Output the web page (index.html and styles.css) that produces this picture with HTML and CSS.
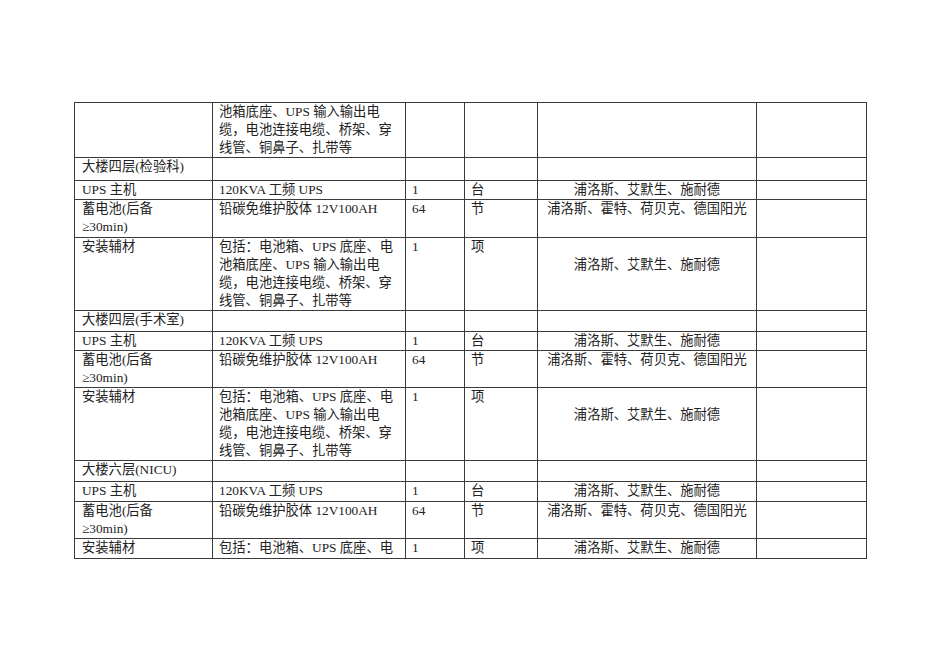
FILE: index.html
```html
<!DOCTYPE html>
<html lang="zh">
<head>
<meta charset="utf-8">
<link rel="stylesheet" href="styles.css">
</head>
<body>
<div class="page">
<table class="sheet">
  <colgroup>
    <col class="c1"><col class="c2"><col class="c3"><col class="c4"><col class="c5"><col class="c6">
  </colgroup>
  <tr class="h55"><td></td><td>池箱底座、UPS 输入输出电<br>缆，电池连接电缆、桥架、穿<br>线管、铜鼻子、扎带等</td><td></td><td></td><td></td><td></td></tr>
  <tr class="h23"><td>大楼四层(检验科)</td><td></td><td></td><td></td><td></td><td></td></tr>
  <tr class="h19"><td>UPS 主机</td><td>120KVA 工频 UPS</td><td>1</td><td>台</td><td class="brand">浦洛斯、艾默生、施耐德</td><td></td></tr>
  <tr class="h38"><td>蓄电池(后备<br>≥30min)</td><td>铅碳免维护胶体 12V100AH</td><td>64</td><td>节</td><td class="brand">浦洛斯、霍特、荷贝克、德国阳光</td><td></td></tr>
  <tr class="h73"><td>安装辅材</td><td>包括：电池箱、UPS 底座、电<br>池箱底座、UPS 输入输出电<br>缆，电池连接电缆、桥架、穿<br>线管、铜鼻子、扎带等</td><td>1</td><td>项</td><td class="brand low">浦洛斯、艾默生、施耐德</td><td></td></tr>
  <tr class="h21"><td>大楼四层(手术室)</td><td></td><td></td><td></td><td></td><td></td></tr>
  <tr class="h19"><td>UPS 主机</td><td>120KVA 工频 UPS</td><td>1</td><td>台</td><td class="brand">浦洛斯、艾默生、施耐德</td><td></td></tr>
  <tr class="h37"><td>蓄电池(后备<br>≥30min)</td><td>铅碳免维护胶体 12V100AH</td><td>64</td><td>节</td><td class="brand">浦洛斯、霍特、荷贝克、德国阳光</td><td></td></tr>
  <tr class="h72"><td>安装辅材</td><td>包括：电池箱、UPS 底座、电<br>池箱底座、UPS 输入输出电<br>缆，电池连接电缆、桥架、穿<br>线管、铜鼻子、扎带等</td><td>1</td><td>项</td><td class="brand low">浦洛斯、艾默生、施耐德</td><td></td></tr>
  <tr class="h21"><td>大楼六层(NICU)</td><td></td><td></td><td></td><td></td><td></td></tr>
  <tr class="h20"><td>UPS 主机</td><td>120KVA 工频 UPS</td><td>1</td><td>台</td><td class="brand">浦洛斯、艾默生、施耐德</td><td></td></tr>
  <tr class="h37"><td>蓄电池(后备<br>≥30min)</td><td>铅碳免维护胶体 12V100AH</td><td>64</td><td>节</td><td class="brand">浦洛斯、霍特、荷贝克、德国阳光</td><td></td></tr>
  <tr class="h20"><td>安装辅材</td><td>包括：电池箱、UPS 底座、电</td><td>1</td><td>项</td><td class="brand">浦洛斯、艾默生、施耐德</td><td></td></tr>
</table>
</div>
</body>
</html>
```

FILE: styles.css
```css
html, body {
  margin: 0;
  padding: 0;
  background: #ffffff;
}

.page {
  padding: 102px 0 0 74px;
}

.sheet {
  border-collapse: collapse;
  table-layout: fixed;
  width: 792px;
  font-family: "Liberation Serif", "Noto Sans CJK SC", serif;
  font-size: 13.3px;
  line-height: 18px;
  color: #222222;
}

.c1 { width: 138px; }
.c2 { width: 193px; }
.c3 { width: 59px; }
.c4 { width: 73px; }
.c5 { width: 219px; }
.c6 { width: 110px; }

.sheet td {
  box-sizing: border-box;
  border: 1px solid #3a3a3a;
  padding: 0 6px;
  vertical-align: top;
  white-space: nowrap;
  overflow: hidden;
}

.sheet td:first-child {
  padding-left: 7px;
}

.sheet td.brand {
  text-align: center;
  padding: 0 2px;
}

.sheet td.low {
  padding-top: 18px;
}

.h55 td { height: 55px; }
.h23 td { height: 23px; }
.h21 td { height: 21px; }
.h20 td { height: 20px; }
.h19 td { height: 19px; }
.h38 td { height: 38px; }
.h37 td { height: 37px; }
.h73 td { height: 73px; }
.h72 td { height: 72px; }
```
